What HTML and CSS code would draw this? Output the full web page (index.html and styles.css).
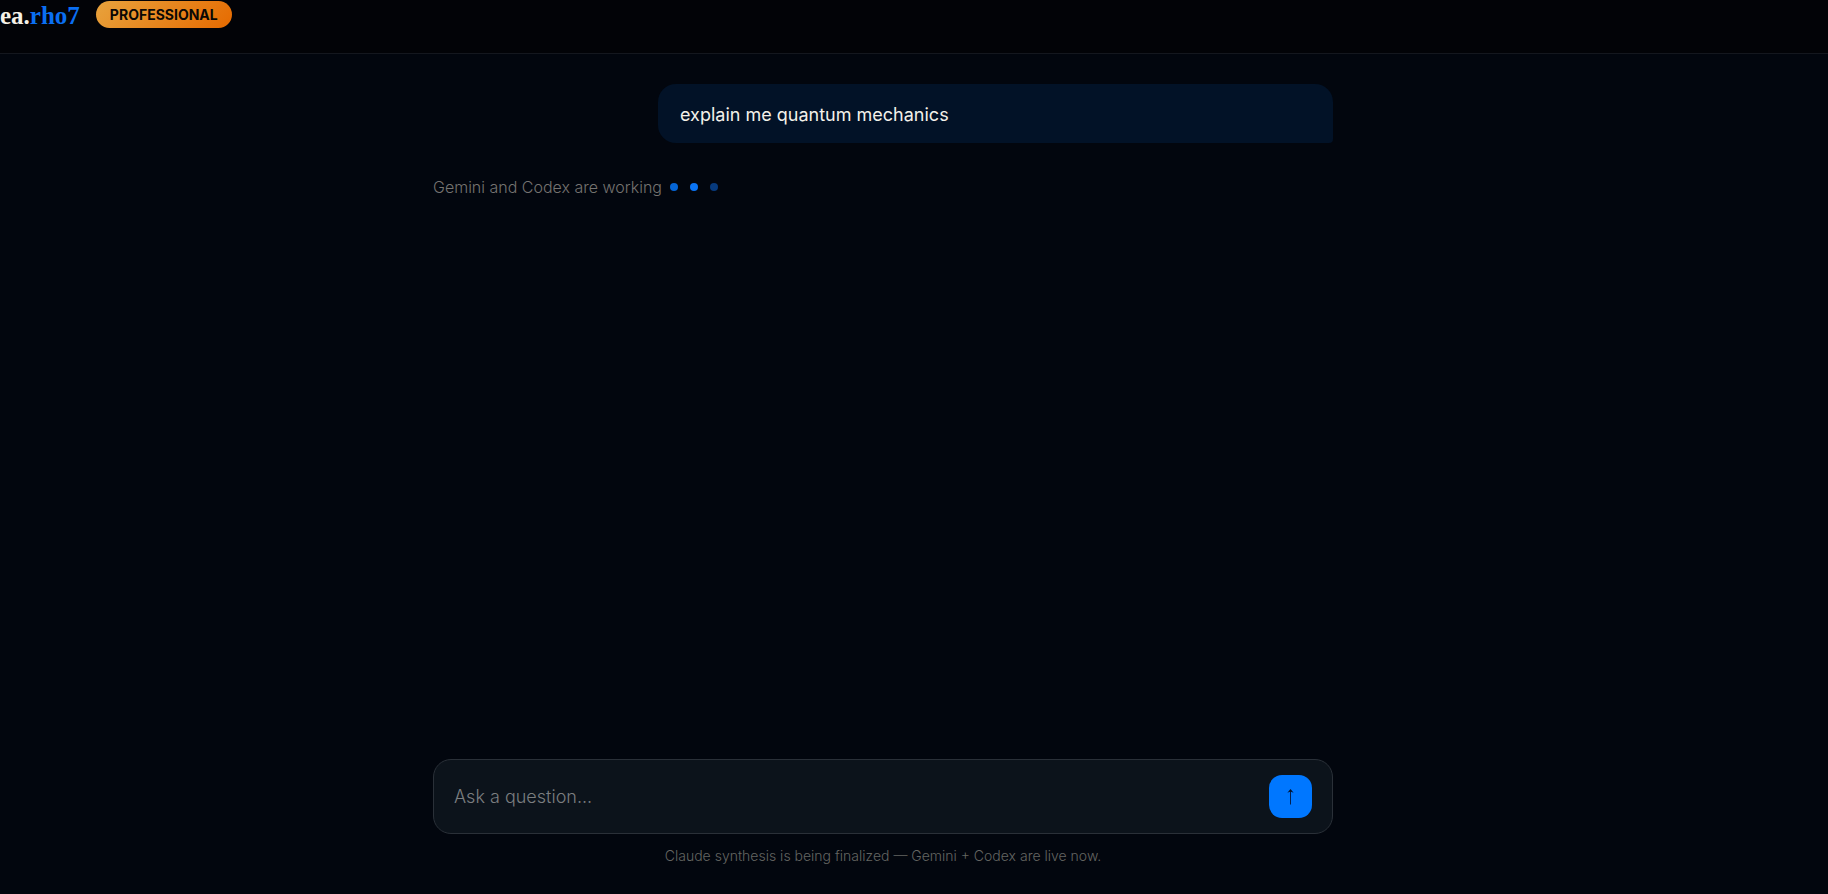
FILE: index.html
```
<!DOCTYPE html>
<html lang="en">
<head>
	<meta charset="utf-8">
	<meta name="viewport" content="width=device-width, initial-scale=1">
	<title>ea.rho7</title>
	<link rel="stylesheet" href="styles.css">
</head>
<body>
	<header class="topbar">
		<a class="logo" href="#">ea.<span>rho7</span></a>
		<span class="badge">PROFESSIONAL</span>
	</header>

	<main class="chat">
		<div class="column">
			<div class="message">explain me quantum mechanics</div>
			<div class="status">
				<span>Gemini and Codex are working</span>
				<div class="dots">
					<i class="dot dot-mid"></i>
					<i class="dot"></i>
					<i class="dot dot-dim"></i>
				</div>
			</div>
		</div>
	</main>

	<footer class="composer">
		<form class="column">
			<div class="box">
				<input type="text" class="question" placeholder="Ask a question..." aria-label="Ask a question">
				<button type="button" class="send" aria-label="Send">
					<svg width="10" height="18" viewBox="0 0 10 18"><path d="M4.5 16.5V2" fill="none" stroke="#03204d"/><path d="M4.5 1L7.6 4.8 4.5 3.6 1.4 4.8z" fill="#03122b"/></svg>
				</button>
			</div>
			<p class="note">Claude synthesis is being finalized — Gemini + Codex are live now.</p>
		</form>
	</footer>
</body>
</html>
```
FILE: styles.css
```
* {
	box-sizing: border-box;
}

body {
	margin: 0;
	min-height: 100vh;
	display: flex;
	flex-direction: column;
	background: #02060e;
	color: #f3f1ea;
	font-family: Inter, "Liberation Sans", sans-serif;
	font-size: 18px;
}

.topbar {
	display: flex;
	align-items: flex-start;
	gap: 16px;
	height: 54px;
	background: #020307;
	border-bottom: 1px solid #14171e;
}

.logo {
	color: #f5f1e6;
	font: bold 25px/32px "Liberation Serif", serif;
	text-decoration: none;
}

.logo span {
	color: #0a6ff2;
}

.badge {
	margin-top: 1px;
	padding: 0 14px;
	border-radius: 14px;
	background: linear-gradient(135deg, #e8a33d, #e66a00);
	color: #0a0805;
	font-size: 14px;
	font-weight: 700;
	line-height: 27px;
}

/* the conversation and the composer share one centred column */
.chat,
.composer {
	padding-right: 62px;
}

.chat {
	flex: 1;
	padding-top: 30px;
}

.column {
	max-width: 900px;
	margin: 0 auto;
}

.message {
	width: 75%;
	margin-left: auto;
	padding: 17px 22px 15px;
	border-radius: 18px 18px 4px 18px;
	background: #021227;
	line-height: 27px;
}

.status {
	display: flex;
	align-items: center;
	gap: 8px;
	margin-top: 32px;
	color: #757370;
	font-size: 16px;
	font-weight: 300;
	line-height: 24px;
}

.dots {
	display: flex;
	gap: 12px;
}

.dot {
	width: 8px;
	height: 8px;
	border-radius: 50%;
	background: #0a74f5;
}

.dot-mid {
	background: #0565d6;
}

.dot-dim {
	background: #073a7d;
}

.box {
	display: flex;
	align-items: center;
	padding: 15px 20px;
	border: 1px solid #2a3038;
	border-radius: 18px;
	background: #0c131b;
}

.question {
	flex: 1;
	min-width: 0;
	padding: 0;
	border: 0;
	outline: 0;
	background: none;
	color: inherit;
	font: 300 18px/27px Inter, "Liberation Sans", sans-serif;
}

.question::placeholder {
	color: #7b7e80;
}

.send {
	display: flex;
	align-items: center;
	justify-content: center;
	width: 43px;
	height: 43px;
	padding: 0;
	border: 0;
	border-radius: 13px;
	background: #0077ff;
}

.note {
	margin: 11px 0 28px;
	color: #646562;
	font-size: 14px;
	font-weight: 300;
	line-height: 21px;
	text-align: center;
}
```
